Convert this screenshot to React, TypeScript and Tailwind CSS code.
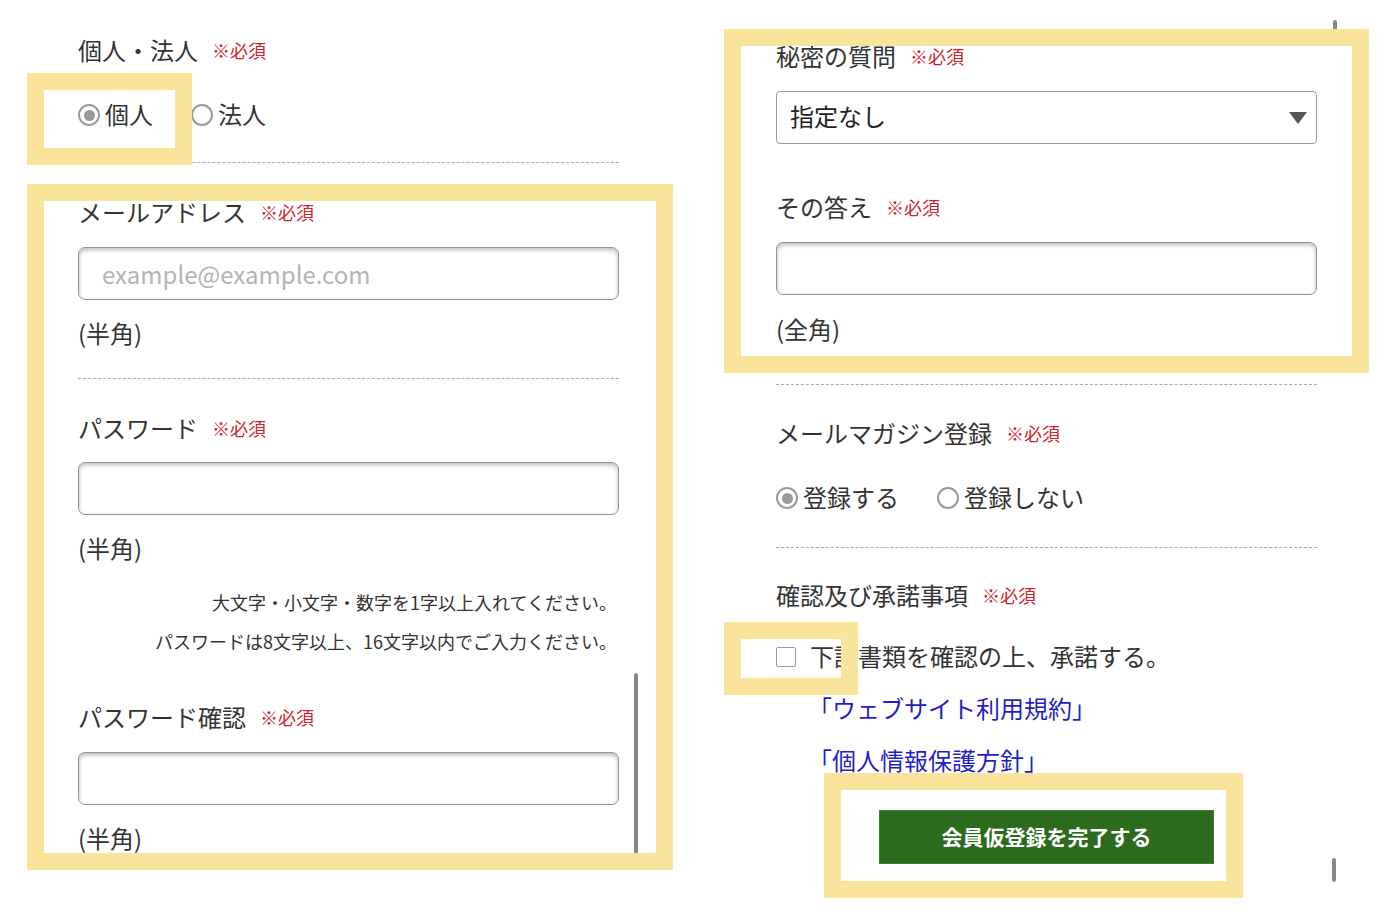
import React from "react";

const Required = () => (
  <span className="ml-[14px] text-[18px] text-[#d1232a]">※必須</span>
);

const Label = ({ text, className = "" }: { text: string; className?: string }) => (
  <div className={`flex items-center h-[40px] pb-[4px] ${className}`}>
    <span className="text-[24px] text-[#333]">{text}</span>
    <Required />
  </div>
);

const TextInput = ({ placeholder, className = "" }: { placeholder?: string; className?: string }) => (
  <input
    readOnly
    placeholder={placeholder}
    className={`w-full h-[53px] rounded-[7px] border-[1.5px] border-[#949494] bg-white px-[23px] text-[24px] text-[#333] placeholder:text-[#b3b3b3] shadow-[inset_0_2px_4px_rgba(0,0,0,0.28)] outline-none ${className}`}
  />
);

const Note = ({ text, className = "" }: { text: string; className?: string }) => (
  <div className={`flex items-center h-[40px] pb-[4px] text-[24px] text-[#333] ${className}`}>{text}</div>
);

const Radio = ({ checked, label }: { checked?: boolean; label: string }) => (
  <label className="flex items-center gap-[5px]">
    <span className="w-[22px] h-[22px] rounded-full border-2 border-[#9a9a9a] flex items-center justify-center">
      {checked && <span className="w-[11px] h-[11px] rounded-full bg-[#9a9a9a]" />}
    </span>
    <span className="text-[24px] text-[#333] pb-[3px]">{label}</span>
  </label>
);

const Dashed = ({ className = "" }: { className?: string }) => (
  <div className={`border-t border-dashed border-[#aaaaaa] ${className}`} />
);

const Frame = ({ className }: { className: string }) => (
  <div className={`absolute border-[17px] border-[#f9e49c] pointer-events-none ${className}`} />
);

export default function App() {
  return (
    <div className="relative w-[1392px] h-[920px] bg-white overflow-hidden font-['Noto_Sans_CJK_JP',sans-serif]">
      <div className="flex pl-[78px] gap-[157px]">
        {/* left column */}
        <div className="w-[541px] flex flex-col">
          <Label text="個人・法人" className="mt-[32px]" />
          <div className="flex items-center h-[40px] mt-[23px] gap-[38px]">
            <Radio checked label="個人" />
            <Radio label="法人" />
          </div>
          <Dashed className="mt-[27px]" />

          <Label text="メールアドレス" className="mt-[31px]" />
          <TextInput placeholder="example@example.com" className="mt-[13px]" />
          <Note text="(半角)" className="mt-[15px]" />
          <Dashed className="mt-[23px]" />

          <Label text="パスワード" className="mt-[31px]" />
          <TextInput className="mt-[12px]" />
          <Note text="(半角)" className="mt-[15px]" />
          <div className="mt-[17px] pr-[2px] text-right text-[18px] text-[#333] leading-[30px]">
            大文字・小文字・数字を1字以上入れてください。
          </div>
          <div className="mt-[9px] pr-[2px] text-right text-[18px] text-[#333] leading-[30px]">
            パスワードは8文字以上、16文字以内でご入力ください。
          </div>

          <Label text="パスワード確認" className="mt-[43px]" />
          <TextInput className="mt-[13px]" />
          <Note text="(半角)" className="mt-[15px]" />
        </div>

        {/* right column */}
        <div className="w-[541px] flex flex-col">
          <Label text="秘密の質問" className="mt-[38px]" />
          <div className="mt-[13px] h-[53px] rounded-[4px] border border-[#9a9a9a] flex items-center justify-between pl-[13px] pr-[9px]">
            <span className="text-[24px] text-[#222] pb-[3px]">指定なし</span>
            <svg width="18" height="12" viewBox="0 0 18 12">
              <path d="M0 0 H18 L9 12 Z" fill="#555" />
            </svg>
          </div>

          <Label text="その答え" className="mt-[45px]" />
          <TextInput className="mt-[13px]" />
          <Note text="(全角)" className="mt-[16px]" />
          <Dashed className="mt-[33px] border-[#a9aec8]" />

          <Label text="メールマガジン登録" className="mt-[30px]" />
          <div className="flex items-center h-[40px] mt-[23px] gap-[38px]">
            <Radio checked label="登録する" />
            <Radio label="登録しない" />
          </div>
          <Dashed className="mt-[29px]" />

          <Label text="確認及び承諾事項" className="mt-[29px]" />
          <div className="flex items-center h-[40px] mt-[20px] gap-[14px]">
            <span className="w-[20px] h-[20px] border-[1.5px] border-[#9a9a9a] rounded-[2px]" />
            <span className="text-[24px] text-[#333] pb-[3px]">下記書類を確認の上、承諾する。</span>
          </div>
          <a href="#" className="flex items-center h-[40px] mt-[13px] pl-[32px] pb-[4px] text-[24px] text-[#1f1fc6]">
            「ウェブサイト利用規約」
          </a>
          <a href="#" className="flex items-center h-[40px] mt-[12px] pl-[32px] pb-[4px] text-[24px] text-[#1f1fc6]">
            「個人情報保護方針」
          </a>
          <button className="mt-[28px] mx-auto w-[335px] h-[54px] bg-[#2c6a1d] border border-[#3f7f2f] text-white text-[21px] font-bold">
            会員仮登録を完了する
          </button>
        </div>
      </div>

      {/* scroll indicators */}
      <div className="absolute left-[634px] top-[673px] w-[4px] h-[190px] rounded-full bg-[#888]" />
      <div className="absolute left-[1333px] top-[20px] w-[4px] h-[14px] rounded-full bg-[#888]" />
      <div className="absolute left-[1332px] top-[858px] w-[4px] h-[24px] rounded-full bg-[#888]" />

      {/* highlight frames */}
      <Frame className="left-[27px] top-[73px] w-[165px] h-[92px]" />
      <Frame className="left-[27px] top-[184px] w-[646px] h-[686px]" />
      <Frame className="left-[724px] top-[29px] w-[645px] h-[344px]" />
      <Frame className="left-[724px] top-[622px] w-[134px] h-[73px]" />
      <Frame className="left-[824px] top-[773px] w-[419px] h-[125px]" />
    </div>
  );
}
